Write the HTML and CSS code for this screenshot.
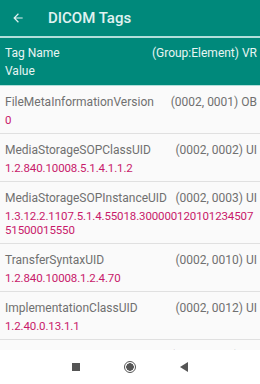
FILE: index.html
```html
<!DOCTYPE html>
<html lang="en">
<head>
    <meta charset="UTF-8">
    <meta name="viewport" content="width=device-width, initial-scale=1.0">
    <title>DICOM Tags</title>
    <link rel="stylesheet" href="styles.css">
</head>
<body>
    <div class="app">
        <div class="toolbar">
            <svg class="back" width="14" height="14" viewBox="0 0 24 24">
                <path d="M20 11H7.83l5.59-5.59L12 4l-8 8 8 8 1.41-1.41L7.83 13H20v-2z" fill="currentColor"/>
            </svg>
            <h1>DICOM Tags</h1>
        </div>

        <div class="table-head">
            <div class="tag-line">
                <span>Tag Name</span>
                <span>(Group:Element) VR</span>
            </div>
            <div>Value</div>
        </div>

        <div class="tag-list">
            <div class="tag-row">
                <div class="tag-line">
                    <span class="name">FileMetaInformationVersion</span>
                    <span class="code">(0002, 0001) OB</span>
                </div>
                <div class="value">0</div>
            </div>
            <div class="tag-row">
                <div class="tag-line">
                    <span class="name">MediaStorageSOPClassUID</span>
                    <span class="code">(0002, 0002) UI</span>
                </div>
                <div class="value">1.2.840.10008.5.1.4.1.1.2</div>
            </div>
            <div class="tag-row">
                <div class="tag-line">
                    <span class="name">MediaStorageSOPInstanceUID</span>
                    <span class="code">(0002, 0003) UI</span>
                </div>
                <div class="value">1.3.12.2.1107.5.1.4.55018.30000012010123450751500015550</div>
            </div>
            <div class="tag-row">
                <div class="tag-line">
                    <span class="name">TransferSyntaxUID</span>
                    <span class="code">(0002, 0010) UI</span>
                </div>
                <div class="value">1.2.840.10008.1.2.4.70</div>
            </div>
            <div class="tag-row">
                <div class="tag-line">
                    <span class="name">ImplementationClassUID</span>
                    <span class="code">(0002, 0012) UI</span>
                </div>
                <div class="value">1.2.40.0.13.1.1</div>
            </div>
            <div class="tag-row">
                <div class="tag-line">
                    <span class="name">ImplementationVersionName</span>
                    <span class="code">(0002, 0013) SH</span>
                </div>
                <div class="value">SPI-LIB</div>
            </div>
        </div>

        <div class="nav-bar">
            <span class="nav-square"></span>
            <span class="nav-circle"></span>
            <span class="nav-back"></span>
        </div>
    </div>
</body>
</html>
```

FILE: styles.css
```css
* {
    margin: 0;
    padding: 0;
    box-sizing: border-box;
}

body {
    font-family: Roboto, 'Noto Sans', sans-serif;
    background: #fafafa;
    color: #707070;
    font-size: 12px;
}

.app {
    width: 260px;
    height: 384px;
    display: flex;
    flex-direction: column;
    overflow: hidden;
}

.toolbar {
    height: 38px;
    background: #00897b;
    color: #e0f2f1;
    display: flex;
    align-items: center;
    padding-left: 11px;
    border-bottom: 2px solid #b2dfdb;
    flex-shrink: 0;
}

.back {
    margin-right: 23px;
}

.toolbar h1 {
    font-size: 15px;
    font-weight: 500;
}

.table-head {
    height: 48px;
    background: #00897b;
    color: #e8f5f3;
    padding: 6px 3px 0 5px;
    line-height: 18px;
    border-bottom: 1px solid #b2dfdb;
    flex-shrink: 0;
}

.tag-line {
    display: flex;
    justify-content: space-between;
    line-height: 18px;
}

.tag-list {
    flex: 1;
    overflow: hidden;
}

.tag-row {
    padding: 7px 3px 6px 5px;
    border-bottom: 1px solid #e0e0e0;
}

.code {
    margin-left: 8px;
    white-space: nowrap;
}

.value {
    margin-top: 2px;
    line-height: 14px;
    font-size: 11.5px;
    color: #c8196a;
    letter-spacing: -0.12px;
    word-break: break-all;
}

.nav-bar {
    height: 34px;
    background: #fff;
    display: flex;
    justify-content: center;
    align-items: center;
    gap: 44px;
    flex-shrink: 0;
}

.nav-square {
    width: 8px;
    height: 8px;
    background: #555;
}

.nav-circle {
    width: 12px;
    height: 12px;
    border-radius: 50%;
    border: 1.5px solid #555;
    background: radial-gradient(circle, #555 0 3.5px, transparent 4px);
}

.nav-back {
    width: 0;
    height: 0;
    border-top: 5px solid transparent;
    border-bottom: 5px solid transparent;
    border-right: 8px solid #555;
}
```
